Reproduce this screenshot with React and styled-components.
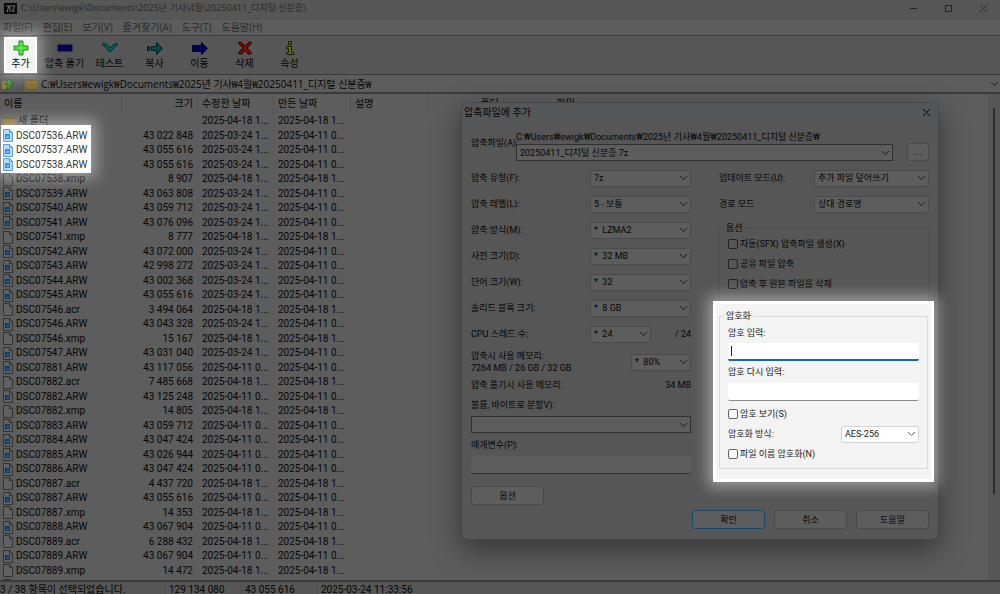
import React from "react";
import styled, { createGlobalStyle, css } from "styled-components";

const c = {
  chrome: "#565656",
  field: "#5d5d5d",
  line: "#3b3b3b",
  soft: "#4c4c4c",
  text: "#050505",
  faded: "#2b2b2b",
};

const titleFont = `"Open Sans", "Noto Sans CJK KR", sans-serif`;
const uiFont = `Roboto, "Noto Sans CJK KR", sans-serif`;

const glow = css`
  box-shadow: 0 0 14px 5px rgba(255, 255, 255, 0.42);
`;

const GlobalStyle = createGlobalStyle`
  *, *::before, *::after { box-sizing: border-box; }
  body { margin: 0; background: ${c.field}; overflow: hidden; }
  button, input, select { font: inherit; color: inherit; margin: 0; padding: 0; }
`;

const Window = styled.div`
  position: relative;
  display: flex;
  flex-direction: column;
  height: 100vh;
  overflow: hidden;
  background: ${c.field};
  color: ${c.text};
  font: 10px/14px ${uiFont};
  white-space: nowrap;
`;

const TitleBar = styled.header`
  display: flex;
  align-items: center;
  gap: 4px;
  height: 20px;
  padding: 0 11px 4px 4px;
  background: ${c.chrome};
  color: ${c.faded};
  flex: none;
`;

const WindowTitle = styled.h1`
  flex: 1;
  margin: 0;
  font: 9px/14px ${titleFont};
`;

const WindowButtons = styled.div`
  display: flex;
  gap: 23px;
`;

const GlyphButton = styled.button`
  display: grid;
  place-items: center;
  width: 12px;
  height: 12px;
  border: 0;
  background: none;
`;

const MenuBar = styled.nav`
  display: flex;
  gap: 10px;
  height: 16px;
  padding: 0 3px 1px;
  border-bottom: 1px solid ${c.line};
  color: ${c.faded};
  font-family: ${titleFont};
  flex: none;
`;

const MenuItem = styled.button`
  border: 0;
  background: none;
`;

const Toolbar = styled.div`
  display: flex;
  align-items: center;
  height: 39px;
  background: ${c.chrome};
  border-bottom: 1px solid ${c.line};
  flex: none;
`;

const Tool = styled.button`
  display: flex;
  flex-direction: column;
  align-items: center;
  width: 45px;
  height: 36px;
  padding-top: 3px;
  border: 0;
  background: none;
  line-height: 15px;
  ${(p) =>
    p.$lit &&
    css`
      position: relative;
      z-index: 2;
      width: 33px;
      margin: 0 5px 0 4px;
      padding-top: 1px;
      border: 2px solid #fff;
      background: #f3f3f3;
      ${glow}
    `}
`;

const AddressBar = styled.div`
  display: flex;
  align-items: center;
  height: 19px;
  background: ${c.chrome};
  border-bottom: 2px solid ${c.line};
  flex: none;
`;

const UpButton = styled.button`
  display: grid;
  place-items: center;
  width: 23px;
  height: 16px;
  padding-right: 7px;
  border: 0;
  background: none;
`;

const Address = styled.label`
  flex: 1;
  display: flex;
  align-items: center;
  gap: 3px;
  height: 17px;
  padding: 0 1px 0 2px;
  border-left: 1px solid ${c.soft};
  background: ${c.field};
  font-family: ${titleFont};

  input {
    flex: 1;
    height: 15px;
    border: 0;
    outline: 0;
    background: none;
  }
`;

const Content = styled.main`
  flex: 1;
  display: flex;
  min-height: 0;
`;

const ListPane = styled.div`
  flex: 1;
  overflow: hidden;
`;

const ScrollTrack = styled.div`
  width: 12px;
  padding: 14px 5px 0;
  background: ${c.chrome};

  &::before {
    content: "";
    display: block;
    height: 386px;
    background: #2c2c2c;
  }
`;

const FileTable = styled.table`
  width: 100%;
  table-layout: fixed;
  border-collapse: separate;
  border-spacing: 0;
  line-height: 14px;

  th {
    height: 20px;
    padding: 0 4px;
    font-weight: 400;
    text-align: left;
    border-right: 1px solid #555;
  }
  th:last-child {
    border: 0;
  }
  td {
    height: 14px;
    padding: 0 5px 0 4px;
  }
  tbody tr:nth-child(even) td {
    height: 15px;
  }
  td:first-child {
    padding: 0 0 0 3px;
  }
`;

const NumHead = styled.th`
  && {
    text-align: right;
  }
`;

const NumCell = styled.td`
  text-align: right;
`;

const NameCell = styled.td`
  position: relative;
  ${(p) =>
    p.$opensSelection &&
    css`
      &::before {
        content: "";
        position: absolute;
        z-index: 1;
        left: 1px;
        top: -3px;
        width: 90px;
        height: 48px;
        background: #fff;
        ${glow}
      }
    `}
`;

const FileName = styled.span`
  display: flex;
  align-items: center;
  gap: 3px;
  height: 14px;
  ${(p) =>
    p.$selected &&
    css`
      position: relative;
      z-index: 2;
      color: #333;
    `}
`;

const StatusBar = styled.footer`
  display: flex;
  height: 14px;
  border-top: 2px solid ${c.line};
  background: ${c.chrome};
  line-height: 16px;
  flex: none;
`;

const StatusCell = styled.span`
  width: ${(p) => p.$w};
  padding-left: ${(p) => (p.$first ? "0" : "3px")};
  border-right: ${(p) => (p.$last ? "0" : `1px solid ${c.soft}`)};
`;

const Dialog = styled.section`
  position: absolute;
  z-index: 3;
  left: 461px;
  top: 102px;
  width: 478px;
  padding-bottom: 10px;
  border: 1px solid #474747;
  border-radius: 6px;
  background: ${c.chrome};
  box-shadow: 0 10px 28px 2px rgba(0, 0, 0, 0.38);
  font-size: 9px;
  line-height: 12px;
`;

const DialogTitle = styled.header`
  display: flex;
  justify-content: space-between;
  align-items: center;
  height: 19px;
  padding: 0 6px 0 2px;
  border-radius: 6px 6px 0 0;
  background: #54575a;

  h2 {
    margin: 0;
    font: inherit;
    font-size: 10px;
  }
`;

const ArchiveRow = styled.div`
  display: grid;
  grid-template-columns: 45px 1fr 22px;
  align-items: end;
  padding: 9px 9px 0;

  > button {
    height: 18px;
  }
`;

const ArchiveField = styled.div`
  display: grid;
  gap: 1px;
  padding-right: 14px;
`;

const FormLabel = styled.label`
  align-self: ${(p) => (p.$raised ? "start" : "auto")};
  padding-top: ${(p) => (p.$raised ? "6px" : "0")};
`;

const Columns = styled.div`
  display: grid;
  grid-template-columns: 220px 220px;
  justify-content: space-between;
  padding: 4px 4px 0 9px;
`;

const Column = styled.div`
  display: flex;
  flex-direction: column;
`;

const Row = styled.div`
  display: flex;
  align-items: center;
  justify-content: space-between;
  height: ${(p) => p.$h || "26px"};
  ${(p) => p.$indent && "padding-right: 5px; padding-left: 5px;"}
`;

const WideSlot = styled.div`
  display: flex;
  align-items: center;
  justify-content: space-between;
  width: 101px;
`;

const SelectBox = styled.span`
  display: grid;
  align-items: center;
  width: ${(p) => p.$w || "100%"};
  height: 17px;
  border: 1px solid ${(p) => (p.$light ? "#d4d4d4" : p.$strong ? "#303030" : "#4b4b4b")};
  border-radius: ${(p) => (p.$strong ? "0" : "2px")};
  background: ${(p) => (p.$light ? "#fff" : c.field)};

  select {
    grid-area: 1 / 1;
    width: 100%;
    height: 15px;
    padding: 0 12px 0 3px;
    border: 0;
    outline: 0;
    appearance: none;
    background: none;
  }
  svg {
    grid-area: 1 / 1;
    justify-self: end;
    margin-right: 2px;
    pointer-events: none;
  }
`;

const TextBox = styled.span`
  display: grid;
  align-items: center;
  height: 18px;
  margin-bottom: ${(p) => p.$after || "0"};
  border-radius: 2px;
  background: ${(p) => (p.$light ? "#fff" : c.field)};
  border-bottom: ${(p) =>
    p.$active ? "2px solid #1466b8" : p.$light ? "1px solid #8a8a8a" : "1px solid #303030"};

  input {
    grid-area: 1 / 1;
    width: 100%;
    height: 15px;
    padding: 0 4px;
    border: 0;
    outline: 0;
    background: none;
  }
`;

const Caret = styled.i`
  grid-area: 1 / 1;
  width: 1px;
  height: 10px;
  margin-left: 3px;
  background: #222;
`;

const PushButton = styled.button`
  width: ${(p) => p.$w || "73px"};
  height: 19px;
  border: 1px solid #494949;
  border-radius: 3px;
  background: ${c.field};
  line-height: 12px;
  ${(p) => p.$primary && "border-color: #17486b;"}
`;

const Group = styled.fieldset`
  min-width: 0;
  margin: 0;
  padding: 0 8px 4px;
  border: 1px solid ${(p) => (p.$light ? "#dcdcdc" : "#4e4e4e")};

  legend {
    margin-left: -4px;
    padding: 0 2px;
    height: 12px;
  }
`;

const OptionGroup = styled(Group)`
  height: 79px;
  margin: 5px 5px 0;
  border-bottom: 0;
`;

const EncryptionPanel = styled.div`
  position: relative;
  z-index: 1;
  height: 181px;
  width: 221px;
  margin-left: -1px;
  padding: 6px 3px 0;
  border: 3px solid #fff;
  background: #f3f3f3;
  color: #1a1a1a;
  ${glow}
`;

const CheckLabel = styled.label`
  display: flex;
  align-items: center;
  gap: 2px;
  height: 20px;

  input {
    appearance: none;
    width: 10px;
    height: 10px;
    border: 1px solid ${(p) => (p.$light ? "#666" : "#222")};
    border-radius: 2px;
    background: ${(p) => (p.$light ? "#fafafa" : c.chrome)};
  }
`;

const Footer = styled.div`
  display: flex;
  justify-content: flex-end;
  gap: 9px;
  padding: 5px 9px 0;
`;

const Note = styled.p`
  margin: 0;
`;

function Chevron({ light }) {
  return (
    <svg width="9" height="6" viewBox="0 0 9 6" fill="none" stroke={light ? "#666" : "#1c1c1c"}>
      <path d="M1 1l3.5 3.5L8 1" />
    </svg>
  );
}

function Select({ id, value, w, light, strong, label }) {
  return (
    <SelectBox $w={w} $light={light} $strong={strong}>
      <select id={id} aria-label={label} defaultValue={value}>
        <option>{value}</option>
      </select>
      <Chevron light={light} />
    </SelectBox>
  );
}

function Check({ id, light, children }) {
  return (
    <CheckLabel htmlFor={id} $light={light}>
      <input id={id} type="checkbox" />
      {children}
    </CheckLabel>
  );
}

function Cross({ size = 9 }) {
  return (
    <svg width={size} height={size} viewBox="0 0 9 9" stroke="currentColor" fill="none">
      <path d="M1 1l7 7M8 1l-7 7" />
    </svg>
  );
}

const toolIcons = {
  add: <path d="M9 1h4v5h5v4h-5v5H9v-5H4V6h5z" fill="#49ee3c" stroke="#2c7a28" />,
  extract: <path d="M4 5h14v6H4z" fill="#00005a" stroke="#0a0a2c" />,
  test: <path d="M3 4h4l4 4 4-4h4l-8 8z" fill="#00605c" stroke="#012826" />,
  copy: (
    <g fill="#024b49" stroke="#021c1b">
      <path d="M3.500 6.500h2v4h-2z" />
      <path d="M7.500 6.500h5v-4l6 6-6 6v-4h-5z" />
    </g>
  ),
  move: <path d="M3.500 5.500h9v-3l6 6-6 6v-3h-9z" fill="#00005a" stroke="#05051c" />,
  remove: (
    <path d="M5 2h2l4 4 4-4h2v2l-4 4 4 4v2h-3l-3-4-3 4H5v-2l4-4-4-4z" fill="#790808" stroke="#2d0303" />
  ),
  info: (
    <path
      d="M9.500 1.500h3v3h-3zM7.500 6.500h5v6h2v2h-7v-2h2v-4h-2z"
      fill="#6c6c00"
      stroke="#1c1c02"
    />
  ),
};

function ToolIcon({ name }) {
  return (
    <svg width="22" height="16" viewBox="0 0 22 16">
      {toolIcons[name]}
    </svg>
  );
}

function FolderIcon() {
  return (
    <svg width="12" height="11" viewBox="0 0 12 11">
      <path d="M0 1h4l1 1h7v9H0z" fill="#6b5218" />
      <path d="M0 3h12v8H0z" fill="#846a2e" />
    </svg>
  );
}

function FileIcon({ kind, selected }) {
  if (kind === "folder") return <FolderIcon />;
  const photo = kind === "photo";
  const edge = selected ? "#5a9fd4" : "#333";
  return (
    <svg width="10" height="13" viewBox="0 0 10 13">
      <path d="M.5.5h6l3 3v9h-9z" fill={selected ? "#b9dcf5" : "#606060"} stroke={edge} />
      <path d="M6.500 .5v3h3" fill="none" stroke={edge} />
      {photo && <path d="M2 5h5v5H2z" fill={selected ? "#2f8fe0" : "#0c3a62"} />}
      {photo && <path d="M3 8l2-2 1 1v2H3z" fill={selected ? "#6db8f5" : "#1b5c8c"} />}
    </svg>
  );
}

const apr18 = "2025-04-18 1...";
const mar24 = "2025-03-24 1...";
const apr11 = "2025-04-11 0...";

const files = [
  ["새 폴더", "", apr18, apr18],
  ["DSC07536.ARW", "43 022 848", mar24, apr11],
  ["DSC07537.ARW", "43 055 616", mar24, apr11],
  ["DSC07538.ARW", "43 055 616", mar24, apr11],
  ["DSC07538.xmp", "8 907", apr18, apr18],
  ["DSC07539.ARW", "43 063 808", mar24, apr11],
  ["DSC07540.ARW", "43 059 712", mar24, apr11],
  ["DSC07541.ARW", "43 076 096", mar24, apr11],
  ["DSC07541.xmp", "8 777", apr18, apr18],
  ["DSC07542.ARW", "43 072 000", mar24, apr11],
  ["DSC07543.ARW", "42 998 272", mar24, apr11],
  ["DSC07544.ARW", "43 002 368", mar24, apr11],
  ["DSC07545.ARW", "43 055 616", mar24, apr11],
  ["DSC07546.acr", "3 494 064", apr18, apr18],
  ["DSC07546.ARW", "43 043 328", mar24, apr11],
  ["DSC07546.xmp", "15 167", apr18, apr18],
  ["DSC07547.ARW", "43 031 040", mar24, apr11],
  ["DSC07881.ARW", "43 117 056", apr11, apr11],
  ["DSC07882.acr", "7 485 668", apr18, apr18],
  ["DSC07882.ARW", "43 125 248", apr11, apr11],
  ["DSC07882.xmp", "14 805", apr18, apr18],
  ["DSC07883.ARW", "43 059 712", apr11, apr11],
  ["DSC07884.ARW", "43 047 424", apr11, apr11],
  ["DSC07885.ARW", "43 026 944", apr11, apr11],
  ["DSC07886.ARW", "43 047 424", apr11, apr11],
  ["DSC07887.acr", "4 437 720", apr18, apr18],
  ["DSC07887.ARW", "43 055 616", apr11, apr11],
  ["DSC07887.xmp", "14 353", apr18, apr18],
  ["DSC07888.ARW", "43 067 904", apr11, apr11],
  ["DSC07889.acr", "6 288 432", apr18, apr18],
  ["DSC07889.ARW", "43 067 904", apr11, apr11],
  ["DSC07889.xmp", "14 472", apr18, apr18],
];

const selectedFrom = 1;
const selectedTo = 3;

const menus = ["파일(F)", "편집(E)", "보기(V)", "즐겨찾기(A)", "도구(T)", "도움말(H)"];

const tools = [
  ["add", "추가"],
  ["extract", "압축 풀기"],
  ["test", "테스트"],
  ["copy", "복사"],
  ["move", "이동"],
  ["remove", "삭제"],
  ["info", "속성"],
];

const settings = [
  ["format", "압축 유형(F):", "7z"],
  ["level", "압축 레벨(L):", "5 - 보통"],
  ["method", "압축 방식(M):", "*\u00a0 LZMA2"],
  ["dict", "사전 크기(D):", "*\u00a0 32 MB"],
  ["word", "단어 크기(W):", "*\u00a0 32"],
  ["solid", "솔리드 블록 크기:", "*\u00a0 8 GB"],
];

function fileKind(name) {
  if (name.endsWith(".ARW")) return "photo";
  return name.includes(".") ? "plain" : "folder";
}

function FileList() {
  return (
    <ListPane>
      <FileTable>
        <colgroup>
          {[122, 76, 76, 77, 77, 76, 76].map((w, i) => (
            <col key={i} width={w} />
          ))}
          <col />
        </colgroup>
        <thead>
          <tr>
            <th>이름</th>
            <NumHead>크기</NumHead>
            <th>수정한 날짜</th>
            <th>만든 날짜</th>
            <th>설명</th>
            <NumHead>폴더</NumHead>
            <NumHead>파일</NumHead>
            <th />
          </tr>
        </thead>
        <tbody>
          {files.map(([name, size, modified, created], i) => {
            const selected = i >= selectedFrom && i <= selectedTo;
            return (
              <tr key={name}>
                <NameCell $opensSelection={i === selectedFrom}>
                  <FileName $selected={selected}>
                    <FileIcon kind={fileKind(name)} selected={selected} />
                    {name}
                  </FileName>
                </NameCell>
                <NumCell>{size}</NumCell>
                <td>{modified}</td>
                <td>{created}</td>
                <td colSpan={4} />
              </tr>
            );
          })}
          <tr>
            <td>
              <FileName>
                <FileIcon kind="plain" />
              </FileName>
            </td>
            <td colSpan={7} />
          </tr>
        </tbody>
      </FileTable>
    </ListPane>
  );
}

function AddDialog() {
  return (
    <Dialog role="dialog" aria-labelledby="dialog-title">
      <DialogTitle>
        <h2 id="dialog-title">압축파일에 추가</h2>
        <GlyphButton aria-label="닫기">
          <Cross />
        </GlyphButton>
      </DialogTitle>

      <ArchiveRow>
        <FormLabel htmlFor="archive" $raised>
          압축파일(A):
        </FormLabel>
        <ArchiveField>
          <span>C:₩Users₩ewigk₩Documents₩2025년 기사₩4월₩20250411_디지털 신분증₩</span>
          <Select id="archive" value="20250411_디지털 신분증.7z" strong />
        </ArchiveField>
        <PushButton $w="22px">...</PushButton>
      </ArchiveRow>

      <Columns>
        <Column>
          {settings.map(([id, label, value]) => (
            <Row key={id}>
              <FormLabel htmlFor={id}>{label}</FormLabel>
              <Select id={id} value={value} w="101px" />
            </Row>
          ))}
          <Row>
            <FormLabel htmlFor="threads">CPU 스레드 수:</FormLabel>
            <WideSlot>
              <Select id="threads" value={"*\u00a0 24"} w="61px" />
              <span>/ 24</span>
            </WideSlot>
          </Row>
          <Row $h="30px">
            <FormLabel htmlFor="memory">
              압축시 사용 메모리:
              <br />
              7264 MB / 26 GB / 32 GB
            </FormLabel>
            <Select id="memory" value={"*\u00a0 80%"} w="60px" />
          </Row>
          <Row $h="16px">
            <Note>압축 풀기시 사용 메모리:</Note>
            <span>34 MB</span>
          </Row>
          <Row $h="23px">
            <FormLabel htmlFor="volume">볼륨, 바이트로 분할V):</FormLabel>
          </Row>
          <Select id="volume" value="" strong />
          <Row $h="23px">
            <FormLabel htmlFor="params">매개변수(P):</FormLabel>
          </Row>
          <TextBox $after="12px">
            <input id="params" type="text" />
          </TextBox>
          <PushButton>옵션</PushButton>
        </Column>

        <Column>
          <Row $indent>
            <FormLabel htmlFor="update">업데이트 모드(U):</FormLabel>
            <Select id="update" value="추가 파일 덮어쓰기" w="115px" />
          </Row>
          <Row $indent>
            <FormLabel htmlFor="paths">경로 모드</FormLabel>
            <Select id="paths" value="상대 경로명" w="115px" />
          </Row>
          <OptionGroup>
            <legend>옵션</legend>
            <Check id="sfx">자동(SFX) 압축파일 생성(X)</Check>
            <Check id="shared">공유 파일 압축</Check>
            <Check id="delete">압축 후 원본 파일을 삭제</Check>
          </OptionGroup>
          <EncryptionPanel>
            <Group $light>
              <legend>암호화</legend>
              <Row $h="21px">
                <FormLabel htmlFor="pw">암호 입력:</FormLabel>
              </Row>
              <TextBox $light $active>
                <input id="pw" type="password" />
                <Caret />
              </TextBox>
              <Row $h="22px">
                <FormLabel htmlFor="pw2">암호 다시 입력:</FormLabel>
              </Row>
              <TextBox $light $after="3px">
                <input id="pw2" type="password" />
              </TextBox>
              <Check id="show" light>
                암호 보기(S)
              </Check>
              <Row $h="20px">
                <FormLabel htmlFor="cipher">암호화 방식:</FormLabel>
                <Select id="cipher" value="AES-256" w="78px" light />
              </Row>
              <Check id="names" light>
                파일 이름 암호화(N)
              </Check>
            </Group>
          </EncryptionPanel>
        </Column>
      </Columns>

      <Footer>
        <PushButton $primary>확인</PushButton>
        <PushButton>취소</PushButton>
        <PushButton>도움말</PushButton>
      </Footer>
    </Dialog>
  );
}

export default function App() {
  return (
    <>
      <GlobalStyle />
      <Window>
        <TitleBar>
          <svg width="13" height="11" viewBox="0 0 13 11">
            <path d="M0 0h13v11H0z" fill="#080808" />
            <path d="M2 3h3L3 9M6 2v7M7 3h4L8 8h3" fill="none" stroke="#777" />
          </svg>
          <WindowTitle>C:\Users\ewigk\Documents\2025년 기사\4월\20250411_디지털 신분증\</WindowTitle>
          <WindowButtons>
            <GlyphButton aria-label="최소화">
              <svg width="9" height="9" viewBox="0 0 9 9" stroke="#222">
                <path d="M1 4.500h7" />
              </svg>
            </GlyphButton>
            <GlyphButton aria-label="최대화">
              <svg width="9" height="9" viewBox="0 0 9 9" stroke="#222" fill="none">
                <path d="M1.500 1.500h6v6h-6z" />
              </svg>
            </GlyphButton>
            <GlyphButton aria-label="창 닫기">
              <Cross />
            </GlyphButton>
          </WindowButtons>
        </TitleBar>

        <MenuBar>
          {menus.map((m) => (
            <MenuItem key={m}>{m}</MenuItem>
          ))}
        </MenuBar>

        <Toolbar>
          {tools.map(([name, label]) => (
            <Tool key={name} $lit={name === "add"}>
              <ToolIcon name={name} />
              {label}
            </Tool>
          ))}
        </Toolbar>

        <AddressBar>
          <UpButton aria-label="위로">
            <svg width="12" height="13" viewBox="0 0 12 13">
              <path d="M0 4h8v8H0z" fill="#8d7836" />
              <path d="M4 12c2-1 2-2 2-5H3l4-5 4 5H9c0 3-1 5-5 5z" fill="#38a02c" stroke="#1d5a17" />
            </svg>
          </UpButton>
          <Address>
            <FolderIcon />
            <input
              type="text"
              aria-label="주소"
              defaultValue="C:₩Users₩ewigk₩Documents₩2025년 기사₩4월₩20250411_디지털 신분증₩"
            />
            <Chevron />
          </Address>
        </AddressBar>

        <Content>
          <FileList />
          <ScrollTrack />
        </Content>

        <StatusBar>
          <StatusCell $w="166px" $first>
            3 / 38 항목이 선택되었습니다.
          </StatusCell>
          <StatusCell $w="76px">129 134 080</StatusCell>
          <StatusCell $w="76px">43 055 616</StatusCell>
          <StatusCell $w="auto" $last>
            2025-03-24 11:33:56
          </StatusCell>
        </StatusBar>

        <AddDialog />
      </Window>
    </>
  );
}
